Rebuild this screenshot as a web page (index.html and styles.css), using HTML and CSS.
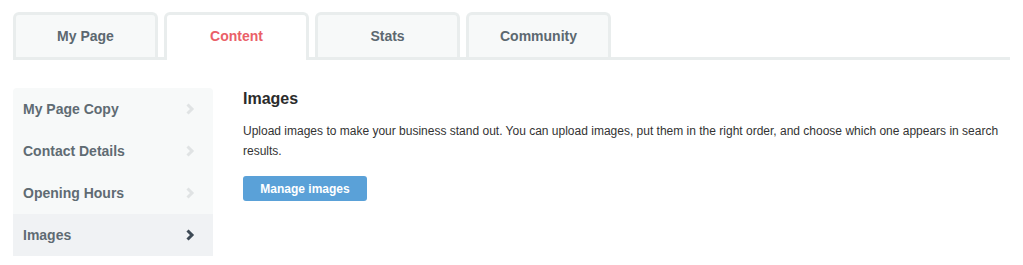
FILE: index.html
```html
<!DOCTYPE html>
<html>

<head>
  <meta charset="UTF-8">
  <link rel="stylesheet" href="styles.css">
</head>

<body>
  <div class="page">
    <div class="tabs">
      <div class="tab">My Page</div>
      <div class="tab active">Content</div>
      <div class="tab">Stats</div>
      <div class="tab">Community</div>
    </div>

    <div class="content">
      <ul class="side-nav">
        <li class="nav-item">
          <span>My Page Copy</span>
          <svg class="chevron" width="10" height="14" viewBox="0 0 10 14"><path d="M2.5 2.5 L7 7 L2.5 11.5" /></svg>
        </li>
        <li class="nav-item">
          <span>Contact Details</span>
          <svg class="chevron" width="10" height="14" viewBox="0 0 10 14"><path d="M2.5 2.5 L7 7 L2.5 11.5" /></svg>
        </li>
        <li class="nav-item">
          <span>Opening Hours</span>
          <svg class="chevron" width="10" height="14" viewBox="0 0 10 14"><path d="M2.5 2.5 L7 7 L2.5 11.5" /></svg>
        </li>
        <li class="nav-item active">
          <span>Images</span>
          <svg class="chevron" width="10" height="14" viewBox="0 0 10 14"><path d="M2.5 2.5 L7 7 L2.5 11.5" /></svg>
        </li>
      </ul>

      <div class="panel">
        <h2>Images</h2>
        <p>Upload images to make your business stand out. You can upload images, put them in the right order, and choose which one appears in search results.</p>
        <button>Manage images</button>
      </div>
    </div>
  </div>
</body>

</html>
```

FILE: styles.css
```css
* {
  margin: 0;
  padding: 0;
  box-sizing: border-box;
}

body {
  font-family: 'Liberation Sans', Arial, sans-serif;
  background: #fff;
  color: #333;
}

.page {
  padding: 12px 13px 0 13px;
}

.tabs {
  display: flex;
  gap: 6px;
  border-bottom: 3px solid #e9eded;
}

.tab {
  width: 145px;
  height: 45px;
  display: flex;
  align-items: center;
  justify-content: center;
  padding-bottom: 1px;
  background: #f7f9f9;
  border: 3px solid #e9eded;
  border-bottom: none;
  border-radius: 6px 6px 0 0;
  font-size: 14px;
  font-weight: bold;
  color: #5c6870;
}

.tab.active {
  background: #fff;
  color: #ea6068;
  height: 48px;
  padding-bottom: 4px;
  margin-bottom: -3px;
}

.content {
  display: flex;
  margin-top: 28px;
}

.side-nav {
  list-style: none;
  width: 200px;
  background: #f7f9f9;
  border-radius: 4px 4px 0 0;
}

.nav-item {
  height: 42px;
  display: flex;
  align-items: center;
  justify-content: space-between;
  padding: 0 18px 0 10px;
  font-size: 14px;
  font-weight: bold;
  color: #5f6b73;
}

.nav-item.active {
  background: #f0f2f4;
}

.chevron path {
  fill: none;
  stroke: #e0e3e4;
  stroke-width: 3;
}

.nav-item.active .chevron path {
  stroke: #3e4a55;
}

.panel {
  flex: 1;
  padding: 2px 0 0 30px;
}

.panel h2 {
  font-size: 16px;
  font-weight: bold;
  color: #2b2b2b;
  margin-bottom: 13px;
}

.panel p {
  font-size: 12px;
  line-height: 20px;
  color: #333;
  margin-bottom: 15px;
}

button {
  width: 124px;
  height: 25px;
  border: none;
  border-radius: 3px;
  background: #5aa1d8;
  color: #fff;
  font-family: inherit;
  font-size: 12px;
  font-weight: bold;
}
```
